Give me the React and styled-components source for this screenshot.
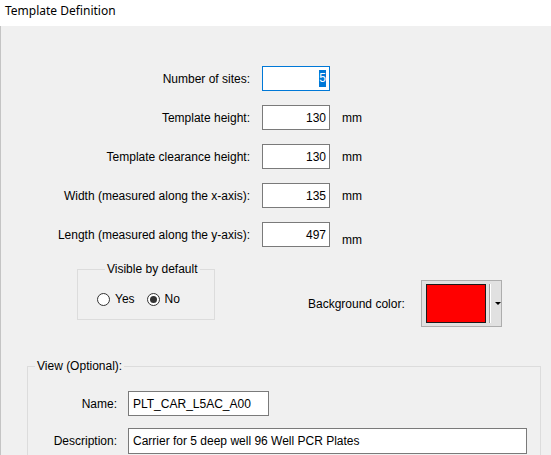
import styled, { createGlobalStyle } from 'styled-components';

const Global = createGlobalStyle`
  html, body {
    margin: 0;
    padding: 0;
    background: #f0f0f0;
    overflow: hidden;
  }
  body {
    font-family: 'Liberation Sans', Arial, sans-serif;
    font-size: 12px;
    color: #000;
  }
`;

const App = () => {
  return (
    <>
      <Global />
      <Header>
        <Title>Template Definition</Title>
      </Header>
      <Panel>
        <FieldGrid>
          <Label>Number of sites:</Label>
          <TextBox $focused>
            <Selected>5</Selected>
          </TextBox>
          <span />

          <Label>Template height:</Label>
          <TextBox>130</TextBox>
          <Unit>mm</Unit>

          <Label>Template clearance height:</Label>
          <TextBox>130</TextBox>
          <Unit>mm</Unit>

          <Label>Width (measured along the x-axis):</Label>
          <TextBox>135</TextBox>
          <Unit>mm</Unit>

          <Label>Length (measured along the y-axis):</Label>
          <TextBox>497</TextBox>
          <Unit $low>mm</Unit>
        </FieldGrid>

        <OptionsRow>
          <VisibleGroup>
            <GroupLegend>Visible by default</GroupLegend>
            <RadioRow>
              <Radio>
                <RadioDot />
                Yes
              </Radio>
              <Radio>
                <RadioDot $checked />
                No
              </Radio>
            </RadioRow>
          </VisibleGroup>
          <ColorField>
            <span>Background color:</span>
            <ColorButton>
              <Swatch $color='#ff0000' />
              <Divider />
              <Arrow />
            </ColorButton>
          </ColorField>
        </OptionsRow>

        <ViewGroup>
          <GroupLegend $indent={7}>View (Optional):</GroupLegend>
          <ViewGrid>
            <Label>Name:</Label>
            <TextBox $width={141} $left>
              PLT_CAR_L5AC_A00
            </TextBox>
            <Label>Description:</Label>
            <TextBox $width={399} $height={26} $left>
              Carrier for 5 deep well 96 Well PCR Plates
            </TextBox>
          </ViewGrid>
        </ViewGroup>
      </Panel>
    </>
  );
};

const Header = styled.header`
  height: 26px;
  background: #fff;
  display: flex;
  align-items: center;
  padding-left: 5px;
  box-sizing: border-box;
`;

const Title = styled.h1`
  margin: 0;
  font-family: 'Noto Sans', 'Open Sans', sans-serif;
  font-size: 12px;
  font-weight: 400;
  line-height: 1;
  margin-top: -4px;
`;

const Panel = styled.main`
  box-sizing: border-box;
  height: calc(100vh - 26px);
  overflow: hidden;
  border-left: 1px solid #c4c4c4;
  padding-top: 40px;
`;

const FieldGrid = styled.div`
  display: grid;
  grid-template-columns: 249px 68px auto;
  grid-auto-rows: 25px;
  column-gap: 12px;
  row-gap: 14px;
  align-items: center;
`;

const Label = styled.span`
  text-align: right;
  white-space: nowrap;
`;

const Unit = styled.span`
  position: relative;
  top: ${(p) => (p.$low ? '5px' : '0')};
`;

const TextBox = styled.div`
  box-sizing: border-box;
  width: ${(p) => (p.$width ? `${p.$width}px` : '68px')};
  height: ${(p) => (p.$height ? `${p.$height}px` : '25px')};
  background: #fff;
  border: 1px solid ${(p) => (p.$focused ? '#0078d7' : '#7a7a7a')};
  display: flex;
  align-items: center;
  justify-content: ${(p) => (p.$left ? 'flex-start' : 'flex-end')};
  padding: ${(p) => (p.$left ? '0 0 0 4px' : '0 3px 0 0')};
  font-size: 12px;
  white-space: nowrap;
`;

const Selected = styled.span`
  background: #0078d7;
  color: #fff;
  line-height: 17px;
`;

const OptionsRow = styled.div`
  display: flex;
  align-items: flex-start;
  padding-left: 76px;
  margin-top: 16px;
`;

const VisibleGroup = styled.fieldset`
  box-sizing: border-box;
  width: 138px;
  height: 57px;
  margin: 0;
  padding: 17px 0 0 19px;
  border: 1px solid #dcdcdc;
`;

const GroupLegend = styled.legend`
  margin-left: ${(p) => (p.$indent ? `${p.$indent}px` : '8px')};
  padding: 0 2px;
  line-height: 13px;
`;

const RadioRow = styled.div`
  display: flex;
  gap: 12px;
`;

const Radio = styled.label`
  display: flex;
  align-items: center;
  gap: 5px;
  line-height: 13px;
`;

const RadioDot = styled.span`
  box-sizing: border-box;
  width: 13px;
  height: 13px;
  border-radius: 50%;
  border: 1px solid #333;
  background: #fff;
  display: flex;
  align-items: center;
  justify-content: center;

  &::after {
    content: '';
    display: ${(p) => (p.$checked ? 'block' : 'none')};
    width: 7px;
    height: 7px;
    border-radius: 50%;
    background: #333;
  }
`;

const ColorField = styled.div`
  display: flex;
  align-items: center;
  gap: 16px;
  margin-left: 93px;
  margin-top: 17px;
`;

const ColorButton = styled.div`
  box-sizing: border-box;
  width: 81px;
  height: 47px;
  background: #e1e1e1;
  border: 1px solid #adadad;
  display: flex;
  align-items: center;
  padding-left: 4px;
`;

const Swatch = styled.div`
  box-sizing: border-box;
  width: 60px;
  height: 39px;
  background: ${(p) => p.$color};
  border: 1px solid #1a1a1a;
`;

const Divider = styled.div`
  width: 1px;
  height: 39px;
  margin-left: 3px;
  background: #a0a0a0;
  box-shadow: 1px 0 0 #fff;
`;

const Arrow = styled.div`
  margin-left: 5px;
  width: 0;
  height: 0;
  border-left: 3px solid transparent;
  border-right: 3px solid transparent;
  border-top: 3px solid #000;
`;

const ViewGroup = styled.fieldset`
  box-sizing: border-box;
  width: 514px;
  height: 120px;
  margin: 33px 0 0 26px;
  padding: 18px 0 0 0;
  border: 1px solid #dcdcdc;
`;

const ViewGrid = styled.div`
  display: grid;
  grid-template-columns: 89px auto;
  column-gap: 11px;
  row-gap: 12px;
  align-items: center;
  justify-content: start;
`;

export default App;
